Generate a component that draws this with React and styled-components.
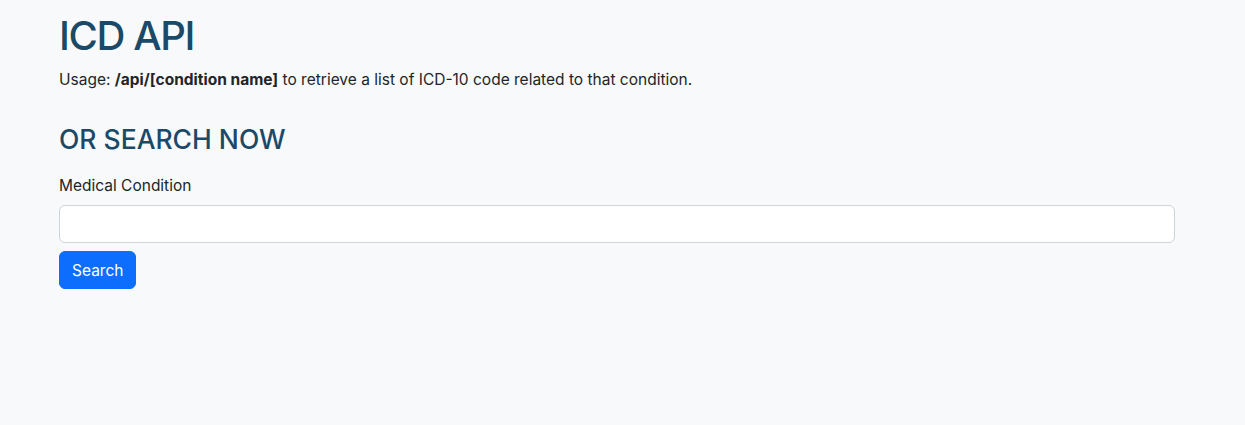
import React, { useState } from "react";
import styled, { createGlobalStyle } from "styled-components";

const GlobalStyle = createGlobalStyle`
  * { box-sizing: border-box; }
  body {
    margin: 0;
    background: #f8f9fa;
    color: #212529;
    font-family: Inter, "Noto Sans", sans-serif;
    font-size: 16px;
    line-height: 1.5;
  }
`;

const Container = styled.div`
  width: 1116px;
  margin-left: 59px;
  padding-top: 12px;
`;

const Title = styled.h1`
  margin: 0 0 8px;
  font-size: 40px;
  font-weight: 500;
  letter-spacing: -1.4px;
  line-height: 1.2;
  color: #1b4a68;
`;

const Usage = styled.p`
  margin: 0 0 16px;
  font-size: 15.5px;
`;

const SubTitle = styled.h4`
  margin: 33px 0 18px;
  font-size: 26.5px;
  font-weight: 500;
  line-height: 1.2;
  color: #1b4a68;
`;

const Form = styled.form`
  display: flex;
  flex-direction: column;
  align-items: flex-start;
`;

const Label = styled.label`
  font-size: 15.5px;
  margin-bottom: 8px;
`;

const Input = styled.input`
  width: 100%;
  height: 38px;
  padding: 6px 12px;
  font: inherit;
  background: #fff;
  border: 1px solid #ced4da;
  border-radius: 6px;
  margin-bottom: 8px;
  outline: none;
`;

const Button = styled.button`
  height: 38px;
  padding: 6px 12px;
  font: inherit;
  font-size: 15.5px;
  color: #fff;
  background: #0d6efd;
  border: 1px solid #0d6efd;
  border-radius: 6px;
  cursor: pointer;
`;

const App = () => {
  const [condition, setCondition] = useState("");

  return (
    <>
      <GlobalStyle />
      <Container>
        <Title>ICD API</Title>
        <Usage>
          Usage: <b>/api/[condition name]</b> to retrieve a list of ICD-10 code
          related to that condition.
        </Usage>
        <SubTitle>OR SEARCH NOW</SubTitle>
        <Form onSubmit={(e) => e.preventDefault()}>
          <Label htmlFor="condition">Medical Condition</Label>
          <Input
            id="condition"
            value={condition}
            onChange={(e) => setCondition(e.target.value)}
          />
          <Button type="submit">Search</Button>
        </Form>
      </Container>
    </>
  );
};

export default App;
